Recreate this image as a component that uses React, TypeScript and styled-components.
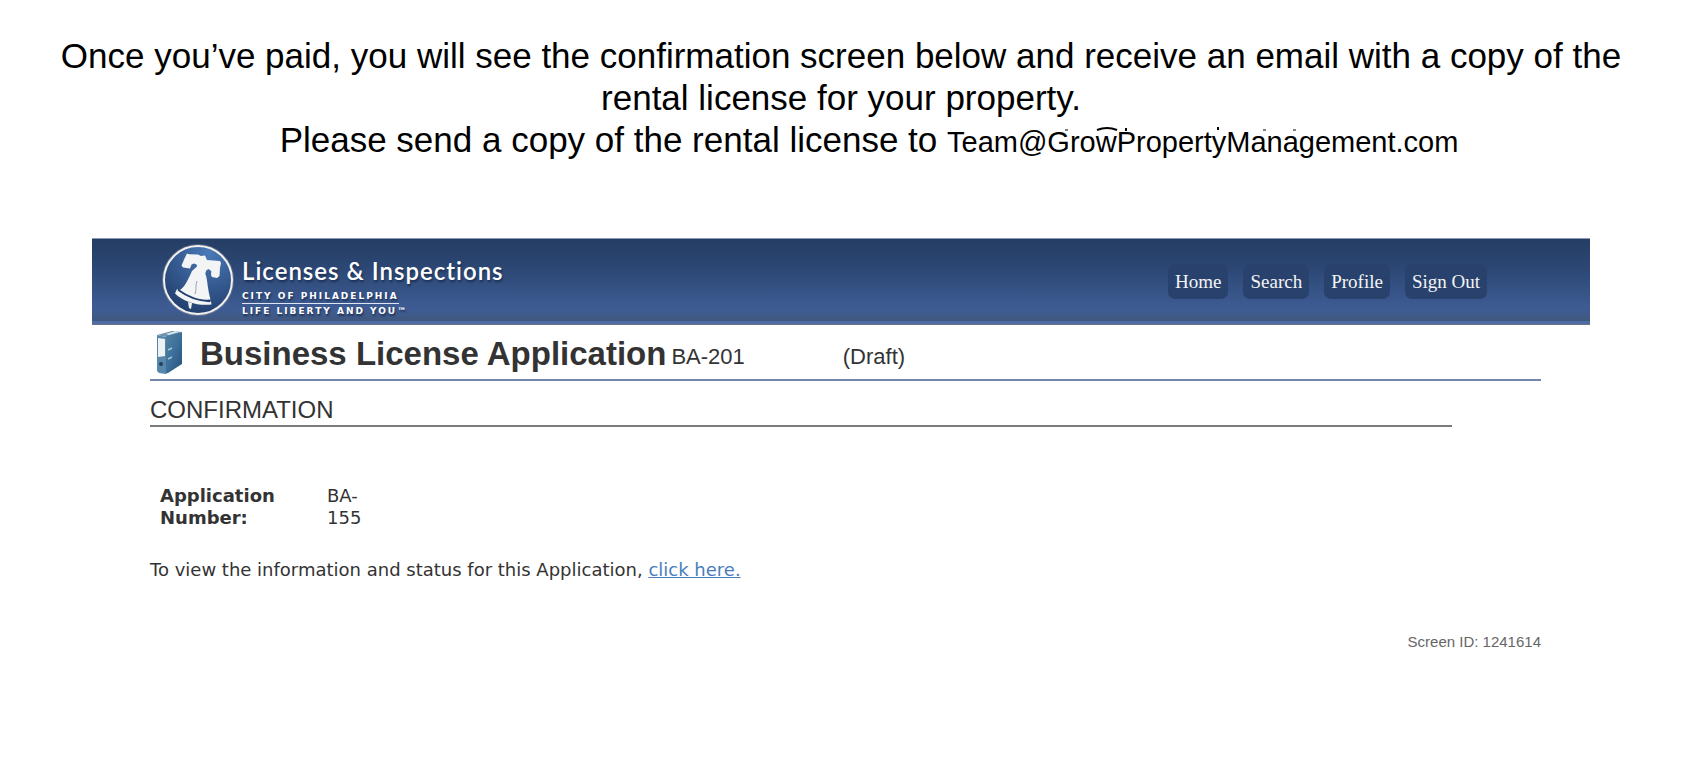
import React from "react";
import styled, { createGlobalStyle } from "styled-components";

const Global = createGlobalStyle`
  *, *::before, *::after { box-sizing: border-box; }
  body { margin: 0; background: #fff; color: #333; font-family: "Liberation Sans", Arial, sans-serif; }
  h1, h2, p, dl, dd { margin: 0; }
`;

const Page = styled.div`
  padding: 35px 106px 24px 92px;
`;

const Intro = styled.p`
  margin: 0 -48px;
  color: #000;
  font-size: 35px;
  line-height: 42px;
  text-align: center;
`;

const IntroLine = styled.span`
  display: block;
  padding-left: 56px;
`;

const Email = styled.span`
  position: relative;
  font-size: 29px;
  line-height: 1;
`;

const Marks = styled.svg`
  position: absolute;
  left: 112px;
  top: 0;
`;

const Screen = styled.section`
  margin-top: 77px;
`;

const Banner = styled.header`
  display: flex;
  align-items: center;
  justify-content: space-between;
  height: 87px;
  padding: 0 103px 4px 70px;
  border-top: 1px solid #8c9ab2;
  border-bottom: 1px solid #6f7186;
  background: linear-gradient(#243d64 0, #2a4570 28%, #3e5c94 82%, #40587f 96%, #4d6ca4 97%);
`;

const Brand = styled.a`
  display: flex;
  align-items: center;
  gap: 8px;
  color: #fff;
  text-decoration: none;
`;

const BrandText = styled.span`
  display: flex;
  flex-direction: column;
  align-items: flex-start;
  padding-top: 12px;
  text-shadow: 1px 2px 2px #1b3054;
`;

const BrandName = styled.span`
  font: 600 24px/36px Lato, sans-serif;
  letter-spacing: 1px;
`;

const BrandLine = styled.span<{ $ruled?: boolean }>`
  font: 700 9px/14px "DejaVu Sans", Verdana, sans-serif;
  letter-spacing: 2px;
  border-bottom: ${(p) => (p.$ruled ? "1px solid #dfe5f0" : "0")};
`;

const Nav = styled.nav`
  display: flex;
  gap: 15px;
  padding-top: 3px;
`;

const NavLink = styled.a`
  padding: 0 7px;
  border-radius: 7px;
  background: #28426d;
  color: #f4f4f4;
  font: 19px/35px "Liberation Serif", "Times New Roman", serif;
  text-decoration: none;
`;

const Body = styled.main`
  margin: 0 49px 0 58px;
`;

const TitleRow = styled.div`
  display: flex;
  align-items: center;
  height: 56px;
  padding-left: 6px;
  border-bottom: 2px solid #7386ab;
`;

const Title = styled.h1`
  margin-left: 17px;
  padding-top: 4px;
  font-size: 33px;
  line-height: 40px;
`;

const TitleNote = styled.span<{ $gap: number }>`
  margin-left: ${(p) => p.$gap}px;
  padding-top: 9px;
  font-size: 22px;
  line-height: 28px;
`;

const Section = styled.h2`
  margin-right: 89px;
  padding-top: 14px;
  border-bottom: 2px solid #7b7b7b;
  font-size: 24px;
  font-weight: 400;
  line-height: 30px;
`;

const Details = styled.dl`
  display: flex;
  margin: 58px 0 0 10px;
  font: 18px/22px "DejaVu Sans", Verdana, sans-serif;
`;

const Term = styled.dt`
  width: 167px;
  padding-right: 40px;
  font-weight: 700;
`;

const Value = styled.dd`
  width: 40px;
`;

const Status = styled.p`
  margin-top: 29px;
  font: 18px/24px "DejaVu Sans", Verdana, sans-serif;
  a { color: #4a7ebb; }
`;

const ScreenId = styled.p`
  margin-top: 51px;
  color: #666;
  font-size: 15px;
  line-height: 18px;
  text-align: right;
`;

const Bell = () => (
  <svg width="72" height="72" viewBox="0 0 72 72" aria-hidden="true">
    <defs>
      <radialGradient id="disc" cx=".65" cy=".1" r=".95">
        <stop offset="0" stopColor="#4a7ab8" />
        <stop offset="1" stopColor="#213d6c" />
      </radialGradient>
    </defs>
    <circle cx="36" cy="36" r="35" fill="none" stroke="#8792a8" strokeWidth="2" opacity=".5" />
    <circle cx="36" cy="36" r="34" fill="url(#disc)" stroke="#f3f1ee" strokeWidth="2" />
    <path
      fill="#f3f4f5"
      d="M25 9.500l2 .8 9 .2 3 1.500 4-.5 2 4.500 13 1 1 2-1 5-.5 8-2.500 2-5-1-1-2 .3-4-3-2-2 1.500-1 3c2 5 2 11 3 16 .7 4 1.200 6 2.200 10-11 1-21-3-30.500-9.500 6-4 9-13 12-19l5-4.500-.3-2-2.700-1-2.500 1-1.500 4-7-1-1.500-2 3-7z"
    />
    <path fill="#f3f4f5" d="M15 45c9 8 21 12 34 12.500l.5 3c-13 1.500-27-2-36.500-11z" />
    <path fill="none" stroke="#213d6c" strokeWidth="1.300" d="M16 46c9 7 20 11 32 11.500" />
    <path fill="none" stroke="#9aa5b8" d="M35 37c-2 4 0 8-2 13" />
    <path fill="#f3f4f5" d="M26 58l4 1-1 6-2-1z" />
  </svg>
);

const Binder = () => (
  <svg width="27" height="45" viewBox="0 0 27 45" aria-hidden="true">
    <defs>
      <linearGradient id="side" x1="0" y1="0" x2="1" y2="1">
        <stop offset="0" stopColor="#55849f" />
        <stop offset=".5" stopColor="#3c6f9c" />
        <stop offset="1" stopColor="#275173" />
      </linearGradient>
    </defs>
    <path fill="#6f95ae" d="M1 5L16 1l10 1-16 5z" />
    <path fill="#dfe9ee" d="M10 4l10-3 3 1-10 3z" />
    <path fill="url(#side)" d="M10 6l16-4v32L12 43l-3 1z" />
    <path fill="#5788ab" d="M1 5l9 2v37l-7-1-2-2z" />
    <path fill="#edf2f5" d="M2 8l7 1v17l-7 1z" />
    <circle cx="5" cy="34" r="2" fill="#243f58" />
    <path stroke="#a6c3d7" strokeWidth="1.500" d="M12 20l4-2M12 29l4-2" />
  </svg>
);

const navItems = ["Home", "Search", "Profile", "Sign Out"];

export default function App() {
  return (
    <Page>
      <Global />
      <Intro>
        Once you’ve paid, you will see the confirmation screen below and receive an email with a copy of the rental license for your property.
        <IntroLine>
          Please send a copy of the rental license to{" "}
          <Email>
            Team@GrowPropertyManagement.com
            <Marks width="240" height="8" viewBox="0 0 240 8" aria-hidden="true">
              <path fill="none" stroke="#000" strokeWidth="2" d="M38 4q10-4 20 0M67 2v3M159 1v3" />
              <path fill="none" stroke="#000" d="M6 4h3M204 4h3M234 4h3" />
            </Marks>
          </Email>
        </IntroLine>
      </Intro>
      <Screen>
        <Banner>
          <Brand href="#home">
            <Bell />
            <BrandText>
              <BrandName>Licenses &amp; Inspections</BrandName>
              <BrandLine $ruled>CITY OF PHILADELPHIA</BrandLine>
              <BrandLine>LIFE LIBERTY AND YOU™</BrandLine>
            </BrandText>
          </Brand>
          <Nav>
            {navItems.map((item) => (
              <NavLink key={item} href="#nav">{item}</NavLink>
            ))}
          </Nav>
        </Banner>
        <Body>
          <TitleRow>
            <Binder />
            <Title>Business License Application</Title>
            <TitleNote $gap={5}>BA-201</TitleNote>
            <TitleNote $gap={98}>(Draft)</TitleNote>
          </TitleRow>
          <Section>CONFIRMATION</Section>
          <Details>
            <Term>Application Number:</Term>
            <Value>BA-<br />155</Value>
          </Details>
          <Status>
            To view the information and status for this Application, <a href="#status">click here.</a>
          </Status>
          <ScreenId>Screen ID: 1241614</ScreenId>
        </Body>
      </Screen>
    </Page>
  );
}
